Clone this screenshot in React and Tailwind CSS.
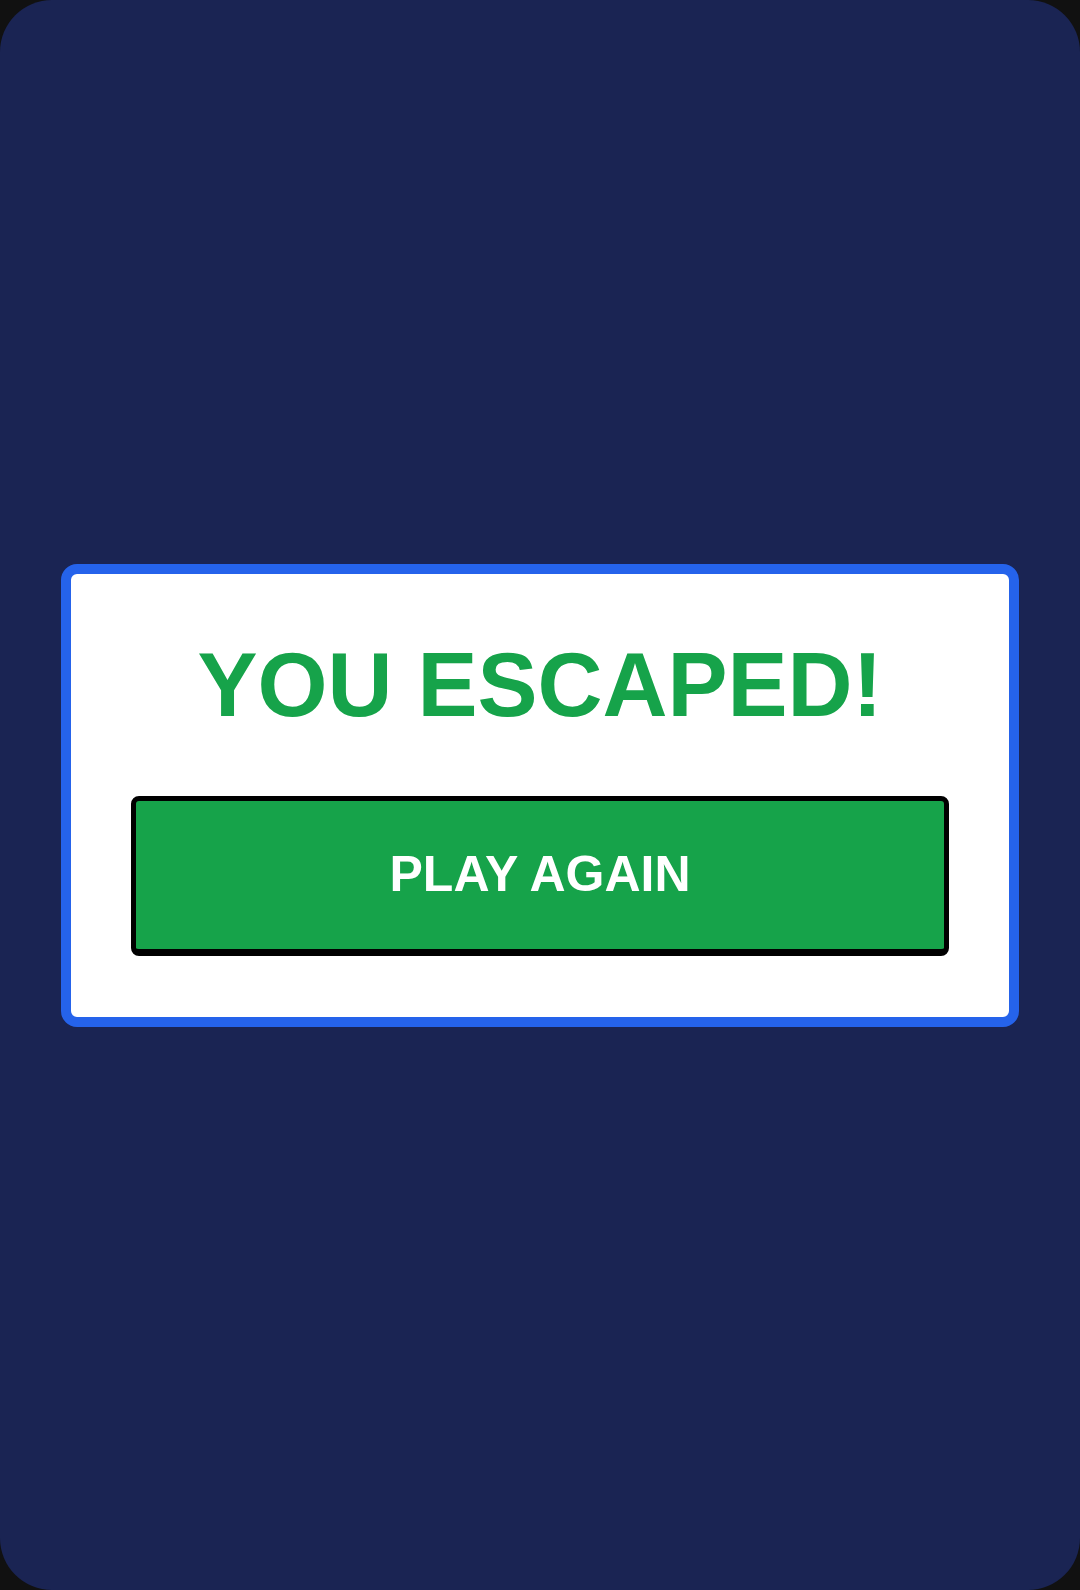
const App = () => {
    return (
        <div className="w-[1080px] h-[1590px] bg-[#111111]">
            <div
                className="w-full h-full rounded-[52px] bg-[#1a2453] flex items-center justify-center px-[61px]"
                style={{ fontFamily: '"Liberation Sans", Arial, sans-serif' }}
            >
                {/* Result card */}
                <div className="w-full bg-white border-[10px] border-[#2563eb] rounded-2xl px-[60px] pt-[66px] pb-[61px] flex flex-col items-center">
                    <h1 className="text-[90px] leading-none font-bold text-[#16a34a]">
                        YOU ESCAPED!
                    </h1>
                    <button className="mt-[66px] w-full h-[160px] bg-[#16a34a] border-[5px] border-b-[7px] border-black rounded-lg text-white text-[50px] font-bold flex items-center justify-center">
                        PLAY AGAIN
                    </button>
                </div>
            </div>
        </div>
    );
};

export default App;
